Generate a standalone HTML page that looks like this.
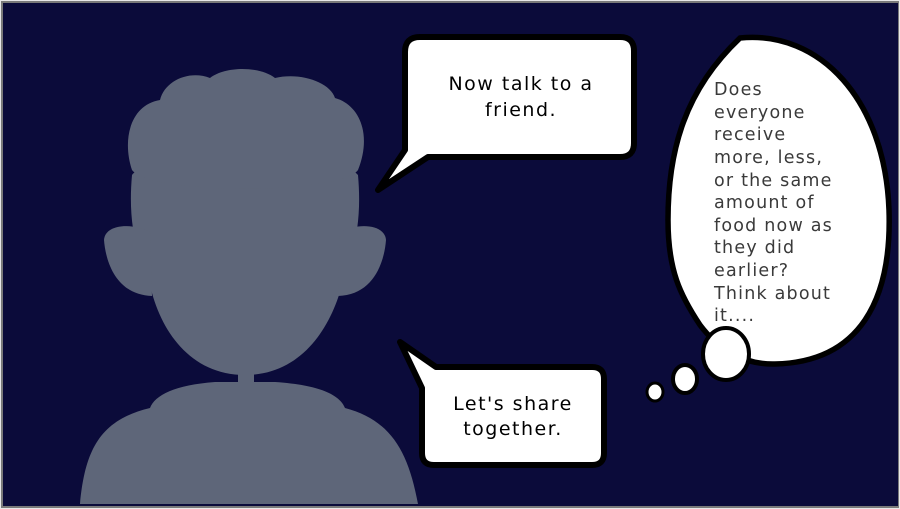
<!DOCTYPE html>
<html><head><meta charset="utf-8"><style>
html,body{margin:0;padding:0;background:#fff}
svg{display:block}
text{font-family:"DejaVu Sans","Liberation Sans",sans-serif}
</style></head><body>
<svg width="900" height="509" viewBox="0 0 900 509" xmlns="http://www.w3.org/2000/svg">
<rect x="0" y="0" width="900" height="509" fill="#e8e8e8"/>
<rect x="1" y="1" width="898" height="507" fill="#7a7a7a"/>
<rect x="3" y="3" width="895" height="503" fill="#0b0b3a"/>
<g fill="#5e6679">
<path d="M80,504 C85,450 100,420 150,408 C155,395 175,385 215,382 L275,382 C320,385 340,395 345,408 C390,420 408,450 418,504 Z"/>
<rect x="238" y="340" width="16" height="56"/>
<path d="M132,175 C128,220 135,250 150,285 C160,330 190,375 245,375 C300,375 330,330 342,285 C355,250 362,220 358,175 C340,150 150,150 132,175 Z"/>
<path d="M150,232 C130,222 105,225 104,240 C106,265 118,295 152,296 Z"/>
<path d="M340,232 C360,222 385,225 386,240 C384,265 372,295 338,296 Z"/>
<path d="M132,170 C122,140 130,105 160,100 C165,80 190,70 210,78 C225,66 260,66 275,78 C300,72 330,82 335,98 C360,105 372,135 358,170 C340,195 150,195 132,170 Z"/>
</g>
<path d="M420,37 L620,37 Q634,37 634,51 L634,143 Q634,157 620,157 L428,157 L378,190 L405,150 L405,52 Q405,37 420,37 Z" fill="#fff" stroke="#000" stroke-width="6" stroke-linejoin="round"/>
<text x="521" y="90" font-size="19" text-anchor="middle" fill="#000" letter-spacing="1.5">Now talk to a</text>
<text x="521" y="116" font-size="19" text-anchor="middle" fill="#000" letter-spacing="1.5">friend.</text>
<path d="M400,342 L436,367 L592,367 Q604,367 604,379 L604,453 Q604,465 592,465 L434,465 Q422,465 422,453 L422,388 Z" fill="#fff" stroke="#000" stroke-width="6" stroke-linejoin="round"/>
<text x="513" y="410" font-size="19" text-anchor="middle" fill="#000" letter-spacing="1.5">Let's share</text>
<text x="513" y="435" font-size="19" text-anchor="middle" fill="#000" letter-spacing="1.5">together.</text>
<path d="M740,38 C820,30 885,100 889,210 C892,300 860,362 775,364 C740,365 715,345 700,325 C680,295 668,270 668,220 C668,150 685,90 740,38 Z" fill="#fff" stroke="#000" stroke-width="5.5"/>
<ellipse cx="726" cy="354" rx="23" ry="26" fill="#fff" stroke="#000" stroke-width="4"/>
<ellipse cx="685" cy="379" rx="12" ry="14" fill="#fff" stroke="#000" stroke-width="4"/>
<ellipse cx="655" cy="392" rx="8" ry="9" fill="#fff" stroke="#000" stroke-width="3"/>
<g font-size="17.5" fill="#3a3a3a" letter-spacing="1.2">
<text x="714" y="95">Does</text>
<text x="714" y="118">everyone</text>
<text x="714" y="140">receive</text>
<text x="714" y="163">more, less,</text>
<text x="714" y="186">or the same</text>
<text x="714" y="208">amount of</text>
<text x="714" y="231">food now as</text>
<text x="714" y="253">they did</text>
<text x="714" y="276">earlier?</text>
<text x="714" y="299">Think about</text>
<text x="714" y="321">it....</text>
</g>
</svg>
</body></html>
